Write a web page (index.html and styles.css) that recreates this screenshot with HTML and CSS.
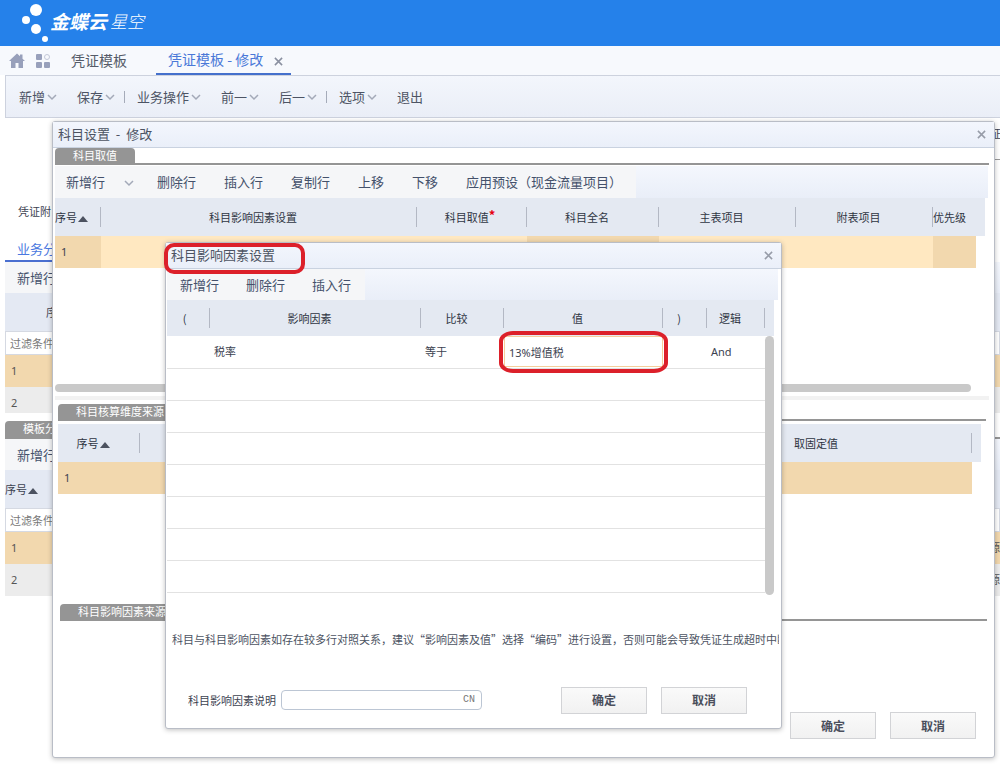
FILE: index.html
```html
<!DOCTYPE html>
<html lang="zh-CN">
<head>
<meta charset="utf-8">
<title>凭证模板 - 修改</title>
<link rel="stylesheet" href="styles.css">
</head>
<body>
<svg class="defs" aria-hidden="true">
  <symbol id="chev" viewBox="0 0 10 8"><path d="M1 2l4 4 4-4" fill="none" stroke="#a3a9b8" stroke-width="1.5"/></symbol>
  <symbol id="close" viewBox="0 0 10 10"><path d="M1 1l8 8M9 1l-8 8" fill="none" stroke="currentColor" stroke-width="1.7"/></symbol>
</svg>
<header class="brand">
  <svg class="brand-mark" viewBox="0 0 28 42" aria-hidden="true">
    <circle cx="14" cy="10" r="6"/><circle cx="4" cy="20" r="4"/><circle cx="14" cy="29" r="5"/><circle cx="23" cy="39" r="3"/>
  </svg>
  <span class="brand-name">金蝶云</span><span class="brand-sub">星空</span>
</header>
<nav class="tabs">
  <svg class="tab-icon" viewBox="0 0 16 16"><path d="M8 0.500L0 8H2V15H6.500V10H9.500V15H14V8H16L13.500 5.700V1.500H11V3.300Z" fill="#98a0bb"/></svg>
  <svg class="tab-icon" viewBox="0 0 16 16"><g fill="#98a0bb"><rect x="1" y="1" width="6" height="6" rx="1"/><rect x="1" y="9" width="6" height="6" rx="1"/><rect x="9" y="9" width="6" height="6" rx="1"/></g><circle cx="12" cy="4" r="2.500" fill="none" stroke="#c3c8d8"/></svg>
  <a class="tab" href="#">凭证模板</a>
  <a class="tab active" href="#">凭证模板 - 修改<svg class="x"><use href="#close"/></svg></a>
</nav>
<div class="menu">
  <button>新增<svg><use href="#chev"/></svg></button>
  <button>保存<svg><use href="#chev"/></svg></button>
  <i></i>
  <button>业务操作<svg><use href="#chev"/></svg></button>
  <button>前一<svg><use href="#chev"/></svg></button>
  <button>后一<svg><use href="#chev"/></svg></button>
  <i></i>
  <button>选项<svg><use href="#chev"/></svg></button>
  <button>退出</button>
</div>
<main class="page">
  <div class="form-top"><span class="cut">证</span></div>
  <div class="form-line"><label>凭证附</label></div>
  <div class="subtab"><a href="#">业务分</a></div>
  <div class="bar"><button>新增行</button></div>
  <div class="back-head indent">序</div>
  <input class="filter" placeholder="过滤条件" aria-label="过滤条件">
  <div class="back-row on">1</div>
  <div class="back-row last">2</div>
  <div class="section back"><h2>模板分</h2></div>
  <div class="bar"><button>新增行</button></div>
  <div class="back-head">序号<b class="sort"></b></div>
  <input class="filter" placeholder="过滤条件" aria-label="过滤条件">
  <div class="back-row on">1<span>源</span></div>
  <div class="back-row">2<span>源</span></div>
</main>

<section class="dialog outer">
  <div class="title"><h1>科目设置&nbsp; -&nbsp; 修改</h1><button class="shut" aria-label="关闭"><svg><use href="#close"/></svg></button></div>
  <div class="block first">
    <div class="section"><h2>科目取值</h2></div>
    <div class="bar">
      <button class="split">新增行<svg><use href="#chev"/></svg></button>
      <button>删除行</button><button>插入行</button><button>复制行</button><button>上移</button><button>下移</button><button>应用预设（现金流量项目）</button>
    </div>
    <table class="grid subjects">
      <colgroup><col class="w46"><col><col class="w110"><col class="w132"><col class="w137"><col class="w137"><col class="w43"><col class="w9"></colgroup>
      <thead><tr><th class="flush">序号<b class="sort"></b></th><th>科目影响因素设置</th><th class="need">科目取值<em>*</em></th><th>科目全名</th><th>主表项目</th><th>附表项目</th><th class="flush">优先级</th><th></th></tr></thead>
      <tbody><tr><td class="dark">1</td><td></td><td></td><td class="dark"></td><td></td><td></td><td class="dark"></td><td class="none"></td></tr></tbody>
    </table>
    <div class="hscroll"></div>
    <div class="splitter"></div>
  </div>
  <div class="block second">
    <div class="section"><h2>科目核算维度来源</h2></div>
    <table class="grid dims">
      <colgroup><col class="w82"><col><col class="w178"><col class="w9"></colgroup>
      <thead><tr><th>序号<b class="sort"></b></th><th></th><th class="flush">取固定值</th><th></th></tr></thead>
      <tbody><tr><td class="dark">1</td><td class="dark"></td><td class="dark"></td><td class="none"></td></tr></tbody>
    </table>
  </div>
  <div class="block third">
    <div class="section"><h2>科目影响因素来源</h2></div>
  </div>
  <div class="actions"><button>确定</button><button>取消</button></div>
</section>

<section class="dialog inner">
  <div class="title"><h1>科目影响因素设置</h1><button class="shut" aria-label="关闭"><svg><use href="#close"/></svg></button></div>
  <div class="factor">
    <div class="bar"><button>新增行</button><button>删除行</button><button>插入行</button></div>
    <div class="factor-grid">
      <table class="grid lines">
        <colgroup><col class="w43"><col><col class="w83"><col class="w159"><col class="w44"><col class="w58"><col class="w9"></colgroup>
        <thead><tr><th>(</th><th>影响因素</th><th>比较</th><th>值</th><th>)</th><th>逻辑</th><th></th></tr></thead>
        <tbody>
          <tr><td></td><td>税率</td><td>等于</td><td class="edit"><input value="13%增值税" aria-label="值"></td><td></td><td>And</td><td class="none"></td></tr>
          <tr><td colspan="6"></td><td class="none"></td></tr>
          <tr><td colspan="6"></td><td class="none"></td></tr>
          <tr><td colspan="6"></td><td class="none"></td></tr>
          <tr><td colspan="6"></td><td class="none"></td></tr>
          <tr><td colspan="6"></td><td class="none"></td></tr>
          <tr><td colspan="6"></td><td class="none"></td></tr>
          <tr><td colspan="6"></td><td class="none"></td></tr>
        </tbody>
      </table>
      <div class="vscroll"></div>
    </div>
    <p class="hint">科目与科目影响因素如存在较多行对照关系，建议“影响因素及值”选择“编码”进行设置，否则可能会导致凭证生成超时中断</p>
  </div>
  <div class="foot">
    <label for="desc">科目影响因素说明</label>
    <div class="lang-field"><input id="desc"><span>CN</span></div>
    <div class="actions"><button>确定</button><button>取消</button></div>
  </div>
  <div class="mark mark-title"></div>
  <div class="mark mark-value"></div>
</section>
</body>
</html>
```
FILE: styles.css
```css
* { box-sizing: border-box; }
body {
  margin: 0;
  position: relative;
  min-height: 100vh;
  overflow-x: hidden;
  background: #fff;
  color: #3c4250;
  font: 11px/16px "Noto Sans CJK SC", sans-serif;
}
h1, h2, p { margin: 0; font-weight: 400; }
button, input { font: inherit; color: inherit; border: 0; background: none; padding: 0; }
a { color: inherit; text-decoration: none; }
.defs { position: absolute; width: 0; height: 0; }

.brand { display: flex; align-items: center; height: 46px; padding: 0 0 4px 22px; background: #2581ea; color: #fff; }
.brand-mark { width: 28px; height: 42px; fill: #fff; align-self: flex-start; }
.brand-name { font-size: 19px; font-weight: 700; font-style: italic; }
.brand-sub { margin-left: 3px; font-size: 17px; font-weight: 300; font-style: italic; }

.tabs { display: flex; align-items: center; height: 29px; padding-left: 9px; background: #f7f9fd; }
.tab-icon { width: 16px; height: 16px; margin-right: 10px; }
.tab { padding: 0 15px 0 10px; font-size: 14px; line-height: 27px; color: #555b68; }
.tab.active { display: flex; align-items: center; margin-left: 14px; padding: 0 8px 0 12px; border-bottom: 2px solid #4470cc; color: #4a78d8; }
.x { width: 9px; height: 9px; margin: 3px 0 0 11px; color: #8a90a0; }

.menu { display: flex; align-items: center; height: 43px; margin-left: 5px; padding-left: 13px; border: 1px solid #cdd2de; border-right: 0; background: linear-gradient(#f3f6fc, #eaeef7); color: #4d5464; font-size: 13px; }
.menu button { display: flex; align-items: center; margin-right: 20px; }
.menu svg { width: 10px; height: 8px; margin-left: 2px; }
.menu i { width: 1px; height: 12px; margin: 0 12px 0 -11px; background: #a5abb9; }

.page { padding-left: 5px; }
.form-top { display: flex; justify-content: flex-end; height: 39px; margin: 3px 0 0 60px; padding-top: 4px; border-bottom: 1px solid #999; }
.cut { margin-right: -1px; }
.form-line { height: 79px; padding: 43px 13px 0; }
.subtab { display: flex; height: 23px; color: #4a78e0; font-size: 13px; line-height: 20px; }
.subtab a { padding: 0 24px 0 12px; border-bottom: 2px solid #4a6fd0; }
.bar { display: flex; height: 31px; background: linear-gradient(#f4f7fd, #e9eef8); color: #44516b; font-size: 13px; }
.bar button { padding: 0 14px 0 13px; background: #f5f6f8; }
.page .bar button { padding-left: 12px; }
.back-head { height: 38px; background: #e4e9f3; line-height: 38px; }
.back-head.indent { padding-left: 41px; }
.filter { display: block; width: 100%; height: 24px; padding: 0 4px; border: 1px solid #d5d9e2; background: #fff; }
.filter::placeholder { color: #777; opacity: 1; }
.back-row { display: flex; justify-content: space-between; height: 32px; padding: 0 0 0 6px; background: #ececec; font-family: "Noto Sans", "Noto Sans CJK SC", sans-serif; line-height: 32px; color: #555; }
.back-row.on { background: #f2d8ae; }
.back-row.last { height: 26px; }

.section { display: flex; border-bottom: 2px solid #959595; }
.section h2 { height: 15px; padding: 0 18px; background: #959595; color: #fff; font-size: 11px; line-height: 15px; border-radius: 4px 4px 0 0; }
.section.back { margin-top: 8px; }
.section.back h2 { height: 16px; }

.dialog { position: absolute; display: flex; flex-direction: column; background: #fff; border: 1px solid #b9bdc6; border-radius: 3px; box-shadow: 0 1px 5px rgba(0, 0, 0, .25); }
.outer { top: 121px; left: 52px; right: 5px; }
.inner { top: 242px; left: 165px; right: 218px; }
.title { display: flex; justify-content: space-between; align-items: center; height: 26px; padding: 0 8px 0 5px; border-bottom: 1px solid #c9d2e0; background: linear-gradient(#f3f6fd, #eaeff9); }
.title h1 { padding-bottom: 2px; font-size: 13px; line-height: 22px; color: #4c5362; }
.shut { height: 10px; color: #979ca8; }
.shut svg { display: block; width: 9px; height: 9px; }

.block.first { padding: 0 5px 0 2px; }
.block.second { padding: 4px 8px 0 5px; }
.block.third { padding: 110px 7px 0 7px; }
.first .bar { height: 32px; margin: 1px 1px 0 0; }
.first .bar button { padding: 0 14px; }
.first .bar .split { padding: 0 9px 0 11px; }
.split svg { width: 10px; height: 8px; margin-left: 19px; vertical-align: middle; }

.grid { border-collapse: collapse; table-layout: fixed; width: 100%; }
.grid th { height: 38px; padding: 0 12px 0 0; background: linear-gradient(#b3b8c4, #b3b8c4) right center / 1px 20px no-repeat #e4e9f2; color: #2f3542; font-weight: 400; text-align: center; white-space: nowrap; }
.grid th:last-child { background: #e4e9f2; }
.grid .flush { padding: 0; text-align: left; }
.grid td { height: 32px; padding: 0 6px; background: #ffe8c1; font-family: "Noto Sans", "Noto Sans CJK SC", sans-serif; }
.grid .dark { background: #f2d8ae; }
.grid .none { background: #fff; }
.grid .need { padding-right: 4px; }
.grid em { color: #e60012; font-size: 13px; font-style: normal; font-weight: 700; line-height: 8px; vertical-align: 2px; }
.subjects { width: calc(100% - 4px); }
.subjects th:nth-child(7) { background: #e4e9f2; }
.dims { width: calc(100% - 5px); margin-top: 3px; }
.dims th:nth-child(2) { background: #e4e9f2; }
.sort { display: inline-block; margin-left: 1px; border: 5px solid transparent; border-top: 0; border-bottom: 6px solid #4c5260; }
.hscroll { height: 8px; margin: 116px 18px 4px 0; border-radius: 4px; background: #c9c9c9; }
.splitter { height: 4px; background: #f2f2f2; }
.w9 { width: 9px; }
.w43 { width: 43px; }
.w44 { width: 44px; }
.w46 { width: 46px; }
.w58 { width: 58px; }
.w82 { width: 82px; }
.w83 { width: 83px; }
.w110 { width: 110px; }
.w132 { width: 132px; }
.w137 { width: 137px; }
.w159 { width: 159px; }
.w178 { width: 178px; }

.actions { display: flex; justify-content: flex-end; gap: 14px; }
.actions button { width: 86px; height: 27px; border: 1px solid #d2d3d6; background: linear-gradient(#fafafa, #f1f1f1); font-size: 12px; font-weight: 700; color: #4a4f5c; }
.outer .actions { margin: 91px 18px 18px 0; }

.factor { padding: 0 3px 0 1px; }
.factor-grid { position: relative; margin-right: 4px; }
.lines th { height: 36px; }
.lines th:nth-child(1) { padding-right: 8px; }
.lines td { padding: 0 4px; background: #fff; border-bottom: 1px solid #e2e2e2; }
.lines .none { border: 0; }
.lines .edit { padding: 0; }
.edit input { display: block; width: 100%; height: 31px; padding-left: 4px; border: 1px solid #f6cf9c; }
.vscroll { position: absolute; top: 36px; right: 0; bottom: -2px; width: 9px; border-radius: 5px; background: #c9c9c9; }
.hint { margin: 38px 0 0; padding-left: 5px; overflow: hidden; white-space: nowrap; color: #4c5362; }
.factor .hint { margin-right: -1px; }
.foot { display: flex; align-items: center; margin: 40px 34px 14px 22px; }
.lang-field { display: flex; align-items: center; width: 201px; height: 20px; margin-left: 5px; padding-right: 6px; border: 1px solid #bcc6d4; border-radius: 4px; }
.lang-field input { flex: 1; min-width: 0; }
.lang-field span { color: #777; font-family: "Liberation Mono", monospace; font-size: 10px; }
.foot .actions { flex: 1; }

.mark { position: absolute; border: 4px solid #dc202a; pointer-events: none; }
.mark-title { top: 0; left: -2px; width: 141px; height: 31px; border-radius: 10px; }
.mark-value { top: 88px; left: 333px; width: 169px; height: 42px; border-radius: 14px / 10px; }
```
